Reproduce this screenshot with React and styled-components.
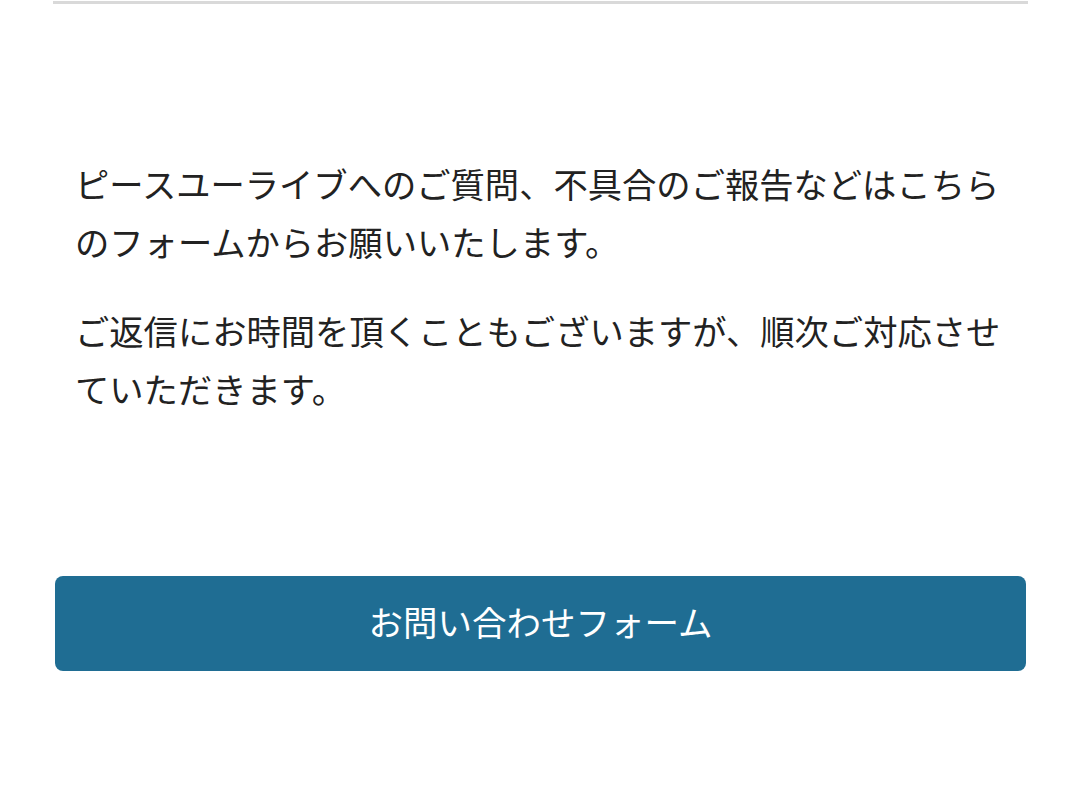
import React from "react";
import styled, { createGlobalStyle } from "styled-components";

const GlobalStyle = createGlobalStyle`
  html, body {
    margin: 0;
    padding: 0;
    background: #fff;
  }
  body {
    font-family: "Noto Sans CJK JP", "Noto Sans", sans-serif;
    color: #222;
  }
`;

function App() {
  return (
    <Page>
      <GlobalStyle />
      <Divider />
      <Body>
        <Text>
          ピースユーライブへのご質問、不具合のご報告などはこちらのフォームからお願いいたします。
        </Text>
        <Text>
          ご返信にお時間を頂くこともございますが、順次ご対応させていただきます。
        </Text>
      </Body>
      <ContactButton type="button">お問い合わせフォーム</ContactButton>
    </Page>
  );
}

const Page = styled.div`
  padding: 1px 52px 0 53px;
  display: flex;
  flex-direction: column;
`;

const Divider = styled.div`
  height: 3px;
  background-color: #d9d9d9;
`;

const Body = styled.div`
  padding: 150px 20px 0 22px;
  display: flex;
  flex-direction: column;
  gap: 31px;
`;

const Text = styled.p`
  margin: 0;
  font-size: 34.3px;
  line-height: 58px;
  letter-spacing: 0;
`;

const ContactButton = styled.button`
  margin: 159px 2px 0;
  height: 95px;
  padding: 0 0 5px;
  border: none;
  border-radius: 8px;
  background-color: #1f6d93;
  color: #fff;
  font-family: "Noto Sans CJK JP", "Noto Sans", sans-serif;
  font-size: 34.5px;
  cursor: pointer;
`;

export default App;
